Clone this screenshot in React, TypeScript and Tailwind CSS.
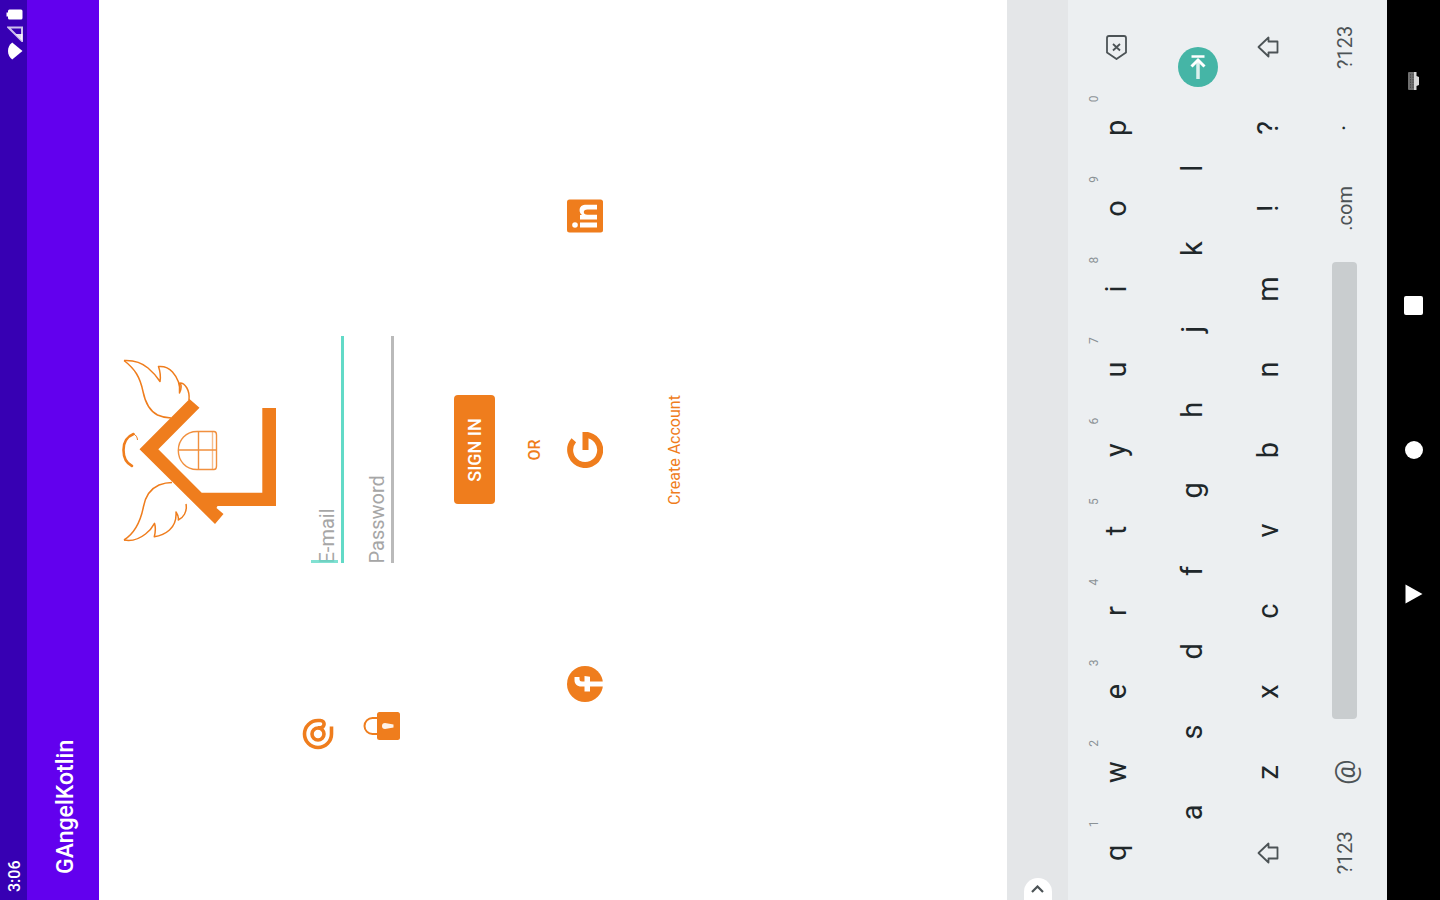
import React from "react";

const TOP_ROW = ["q", "w", "e", "r", "t", "y", "u", "i", "o", "p"];
const HOME_ROW = ["a", "s", "d", "f", "g", "h", "j", "k", "l"];
const BOTTOM_ROW = ["z", "x", "c", "v", "b", "n", "m", "!", "?"];

function StatusBar() {
  return (
    <div className="flex h-[27px] shrink-0 items-center justify-between bg-[#3700b3] pt-0.5 pr-[9px] pl-2 text-white">
      <span className="text-[16px] leading-5 font-medium">3:06</span>
      <div className="flex items-center">
        <svg width="18" height="16" viewBox="0 0 18 16" fill="currentColor" aria-hidden="true">
          <path d="M9 15.500 0.500 5.200C2.600 2.400 5.600 1 9 1s6.400 1.400 8.500 4.200Z" />
        </svg>
        <svg width="16" height="16" viewBox="0 0 16 16" aria-hidden="true">
          <path d="M14.500 1.500v13.500H1Z" fill="none" stroke="currentColor" strokeWidth="2" opacity="0.75" />
          <path d="M1 15.500 8 8.500v7Z" fill="currentColor" opacity="0.85" />
        </svg>
        <svg className="ml-1.5" width="11" height="17" viewBox="0 0 11 17" fill="currentColor" aria-hidden="true">
          <path d="M3.500 0.500h4V2H9a1.500 1.500 0 0 1 1.500 1.500V15A1.500 1.500 0 0 1 9 16.500H2A1.500 1.500 0 0 1 .5 15V3.500A1.500 1.500 0 0 1 2 2h1.500Z" />
        </svg>
      </div>
    </div>
  );
}

function HouseLogo() {
  return (
    <svg width="190" height="160" viewBox="0 0 190 160" fill="none" stroke="#ef7d1d" role="img" aria-label="GAngel">
      <path
        d="M95.700 21.500 146 71.500 137.300 81.500 95.700 40.300 52.300 83.700V144.300H137V158H39V99.500L37 98.500 31 105.500 21 97Z"
        fill="#ef7d1d"
        stroke="none"
      />
      <path d="M111 15.500C108 8 102 5.500 95 5.500S82 8 79 14" strokeWidth="2.600" strokeLinecap="round" />
      <path d="M111 15.500C110 18 108 19.300 105 19.500" strokeWidth="1" />
      <g strokeWidth="1.500" strokeLinejoin="round">
        <path d="M184.500 6C176 17 168 22 153.500 25C141 27.500 134 32 130 39.500C128 44 127 47 127 53" />
        <path d="M184.500 6C185 16 183 23 177 30C172 36 168 39 163.500 42C169 43 174 42 178.500 40.500C179 46 177 51 173 54.500C168 59 160 62.500 152 61.500C156 63.500 159 64 162 62C162 67 155 72 145 71" />
        <path d="M5 6C12 17 23 22.500 38.500 25.500C49 27.500 56 32 60 41C61.500 45 62.500 49 62.500 54" />
        <path d="M5 6C3.500 14 5 20 11 27.500C14 31.500 17 34 21.700 36.500C17 38 13 37.500 8.300 36.300C9 42 11 47 15 51.500C20 57 26 58.500 33 58C30 60 28 61 25 60.300C27 65 33 69.500 41 68" />
      </g>
      <g strokeWidth="1.400" opacity="0.85">
        <path d="M75.500 96V79C75.500 68 84 60.300 94.500 60.300S113.500 68 113.500 79V96C113.500 98 112 98.500 110 98.500H79C77 98.500 75.500 98 75.500 96Z" />
        <path d="M75.500 94.500H113.500" opacity="0.6" />
        <path d="M75.500 80.500H113.500M95 60.500V98" />
      </g>
    </svg>
  );
}

function AtIcon() {
  return (
    <svg className="mr-1" width="36" height="36" viewBox="0 0 36 36" fill="none" stroke="#ef7d1d" strokeWidth="3.600" aria-hidden="true">
      <path d="M25.500 31.500H18A13.500 13.500 0 1 1 31.500 18V20.500A3.600 3.600 0 0 1 24.300 20.500V18" />
      <circle cx="18" cy="18" r="6" />
    </svg>
  );
}

function NextIcon() {
  return (
    <svg width="26" height="26" viewBox="0 0 26 26" fill="none" stroke="currentColor" aria-hidden="true">
      <path d="M1 13H19" strokeWidth="3.500" opacity="0.8" />
      <path d="M13.500 6.500 20 13 13.500 19.500" strokeWidth="3" />
      <path d="M23.500 6.500V19.500" strokeWidth="2.500" />
    </svg>
  );
}

function LockIcon() {
  return (
    <svg width="28" height="37" viewBox="0 0 28 37" fill="none" aria-hidden="true">
      <path d="M6 15V9.500a8 8 0 0 1 16 0V15" stroke="#ef7d1d" strokeWidth="2" />
      <rect x="0" y="14" width="28" height="23" rx="2.500" fill="#ef7d1d" />
      <path d="M14 19a3 3 0 0 1 3 3l-1.500 8.500h-3L11 22a3 3 0 0 1 3-3Z" fill="#fff" opacity="0.9" />
    </svg>
  );
}

function FacebookIcon() {
  return (
    <svg width="36" height="36" viewBox="0 0 36 36" aria-hidden="true">
      <circle cx="18" cy="18" r="18" fill="#ef7d1d" />
      <path
        d="M15.500 36V23H10.500V17.500H15.500V14.500C15.500 10 18 7.500 22 7.500H25V12.500H23C21.300 12.500 20.500 13.300 20.500 15V17.500H26L25.300 23H20.500V36Z"
        fill="#fff"
      />
    </svg>
  );
}

function GoogleIcon() {
  return (
    <svg width="36" height="36" viewBox="0 0 36 36" fill="none" stroke="#ef7d1d" aria-hidden="true">
      <path d="M27.800 6.800A15 15 0 1 0 33 18.500" strokeWidth="6" />
      <path d="M18 18.500H36" strokeWidth="6" />
    </svg>
  );
}

function LinkedInIcon() {
  return (
    <svg width="36" height="36" viewBox="0 0 36 36" aria-hidden="true">
      <rect x="1.500" y="0" width="33" height="36" rx="2.500" fill="#ef7d1d" />
      <g fill="#fff">
        <circle cx="9" cy="8" r="2.800" />
        <path d="M6.600 13H11.400V30H6.600Z" />
        <path d="M14.500 13H19V15.200C20 13.500 21.700 12.600 23.800 12.600C27.500 12.600 29.300 15 29.300 19.500V30H24.600V20.500C24.600 18 23.800 16.800 22 16.800S19.200 18 19.200 20.500V30H14.500Z" />
      </g>
    </svg>
  );
}

function SignInScreen() {
  return (
    <main className="flex flex-1 flex-col items-center bg-white pt-[19px] text-[#ef7d1d]">
      <HouseLogo />
      <form className="mt-[22px] flex w-full flex-col items-center" onSubmit={(e) => e.preventDefault()}>
        <div className="grid w-full grid-cols-[1fr_227px_1fr]">
          <div className="flex flex-col items-end gap-[27px] pr-[149px]">
            <AtIcon />
            <LockIcon />
          </div>
          <div className="flex flex-col gap-2.5 pt-1">
            <div className="relative">
              <input
                type="email"
                aria-label="E-mail"
                placeholder="E-mail"
                className="block h-10 w-full border-b-[3px] border-[#62dac7] pt-2 text-[20px] text-gray-800 outline-none placeholder:text-[#a6a6a6]"
              />
              <span className="absolute top-[7px] left-0 h-[27px] w-[3px] bg-[#62dac7]/80" />
            </div>
            <input
              type="password"
              aria-label="Password"
              placeholder="Password"
              className="block h-10 w-full border-b-[3px] border-[#bababa] pt-2 text-[20px] text-gray-800 outline-none placeholder:text-[#a6a6a6]"
            />
          </div>
        </div>
        <button type="submit" className="mt-[54px] h-[41px] w-[109px] rounded bg-[#ef7d1d] text-[18px] font-medium text-white">
          SIGN IN
        </button>
      </form>
      <span className="mt-7 text-[16px] leading-6 font-medium">OR</span>
      <div className="mt-5 flex w-full justify-evenly">
        <button type="button" aria-label="Sign in with Facebook">
          <FacebookIcon />
        </button>
        <button type="button" aria-label="Sign in with Google">
          <GoogleIcon />
        </button>
        <button type="button" aria-label="Sign in with LinkedIn">
          <LinkedInIcon />
        </button>
      </div>
      <a href="#create" className="mt-[60px] text-[16px] leading-6">
        Create Account
      </a>
    </main>
  );
}

function ShiftIcon() {
  return (
    <svg width="22" height="22" viewBox="0 0 22 22" fill="none" stroke="#4c5356" strokeWidth="1.800" aria-hidden="true">
      <path d="M11 1.500 20.500 11.500H16.500V20.500H5.500V11.500H1.500Z" strokeLinejoin="round" />
    </svg>
  );
}

function BackspaceIcon() {
  return (
    <svg width="25" height="21" viewBox="0 0 25 21" fill="none" stroke="#4c5356" strokeWidth="1.800" aria-hidden="true">
      <path d="M7.500 1H22a2 2 0 0 1 2 2V18a2 2 0 0 1-2 2H7.500L1 10.500Z" strokeLinejoin="round" />
      <path d="M9.500 7 16 14M16 7 9.500 14" />
    </svg>
  );
}

function Key({ label, hint }: { label: string; hint?: string }) {
  return (
    <button type="button" className="relative flex h-full w-full items-center justify-center text-[29px] leading-none">
      {label}
      {hint && <span className="absolute top-2 right-2 text-[12px] leading-4 text-[#8b9296]">{hint}</span>}
    </button>
  );
}

const iconKey = "flex h-full w-full items-center justify-center";
const smallKey = "flex h-full w-full items-center justify-center pt-0.5 text-[20px] leading-none text-[#4c5356]";

function Keyboard() {
  return (
    <section aria-label="Keyboard" className="shrink-0">
      <div className="flex h-[61px] items-center bg-[#e4e6e8]">
        <button type="button" aria-label="More suggestions" className="flex h-7 w-[22px] items-center justify-center rounded-r-full bg-white">
          <svg width="8" height="13" viewBox="0 0 8 13" fill="none" stroke="#4c5356" strokeWidth="2.200" aria-hidden="true">
            <path d="M1 1 6.500 6.500 1 12" />
          </svg>
        </button>
      </div>
      <div className="grid grid-rows-[repeat(4,76px)] bg-[#eceff1] px-[7px] pt-2.5 pb-[5px] text-[#20272a]">
        <div className="grid grid-cols-11">
          {TOP_ROW.map((k, i) => (
            <Key key={k} label={k} hint={String((i + 1) % 10)} />
          ))}
          <button type="button" aria-label="Backspace" className={iconKey}>
            <BackspaceIcon />
          </button>
        </div>
        <div className="grid grid-cols-22">
          <span />
          {HOME_ROW.map((k) => (
            <div key={k} className="col-span-2">
              <Key label={k} />
            </div>
          ))}
          <div className="col-span-3 flex items-center justify-center pt-3">
            <button type="button" aria-label="Next field" className="flex size-10 items-center justify-center rounded-full bg-[#45b5a6] text-white">
              <NextIcon />
            </button>
          </div>
        </div>
        <div className="grid grid-cols-11">
          <button type="button" aria-label="Left shift" className={iconKey}>
            <ShiftIcon />
          </button>
          {BOTTOM_ROW.map((k) => (
            <Key key={k} label={k} />
          ))}
          <button type="button" aria-label="Right shift" className={iconKey}>
            <ShiftIcon />
          </button>
        </div>
        <div className="grid grid-cols-11">
          <button type="button" className={smallKey}>?123</button>
          <button type="button" className="flex h-full w-full items-center justify-center pt-1 text-[28px] leading-none text-[#4c5356]">
            @
          </button>
          <div className="col-span-6 flex items-center px-[13px]">
            <button type="button" aria-label="Space" className="h-[25px] w-full rounded bg-[#c9cdcf]" />
          </div>
          <button type="button" className={smallKey}>.com</button>
          <button type="button" aria-label="Period" className="flex h-full w-full items-center justify-center pb-3.5 text-[24px] leading-none">
            .
          </button>
          <button type="button" className={smallKey}>?123</button>
        </div>
      </div>
    </section>
  );
}

function NavigationBar() {
  return (
    <nav className="grid h-[53px] shrink-0 grid-cols-[1fr_144px_144px_144px_1fr] items-center bg-black text-white">
      <span />
      <button type="button" aria-label="Back" className="flex justify-center">
        <svg width="20" height="18" viewBox="0 0 20 18" fill="currentColor" aria-hidden="true">
          <path d="M0.500 0.500h19L10 17.500Z" />
        </svg>
      </button>
      <button type="button" aria-label="Home" className="flex justify-center">
        <span className="size-[18px] rounded-full bg-white" />
      </button>
      <button type="button" aria-label="Recent apps" className="flex justify-center">
        <span className="size-[19px] rounded-xs bg-white" />
      </button>
      <button type="button" aria-label="Switch keyboard" className="flex justify-end pr-[72px]">
        <svg width="18" height="12" viewBox="0 0 18 12" aria-hidden="true">
          <rect x="0" y="0" width="18" height="8" rx="1" fill="#6f6f6f" />
          <path d="M2 2.500H16M2 5H16" stroke="#4a4a4a" strokeWidth="1" strokeDasharray="1.500 1" />
          <path d="M0 6H18V8.500H14L13 11H5L4 8.500H0Z" fill="#d8d8d8" />
        </svg>
      </button>
    </nav>
  );
}

export default function App() {
  return (
    <div className="h-screen w-full overflow-hidden bg-black">
      {/* Portrait device turned a quarter turn counter-clockwise */}
      <div className="flex h-[100vw] w-[100vh] origin-top-left translate-y-[100vh] -rotate-90 flex-col font-['Roboto',sans-serif]">
        <StatusBar />
        <header className="flex h-[72px] shrink-0 items-center bg-[#6200ee] pt-1.5 pl-[26px] text-white">
          <h1 className="text-[23px] leading-8 font-medium">GAngelKotlin</h1>
        </header>
        <SignInScreen />
        <Keyboard />
        <NavigationBar />
      </div>
    </div>
  );
}
